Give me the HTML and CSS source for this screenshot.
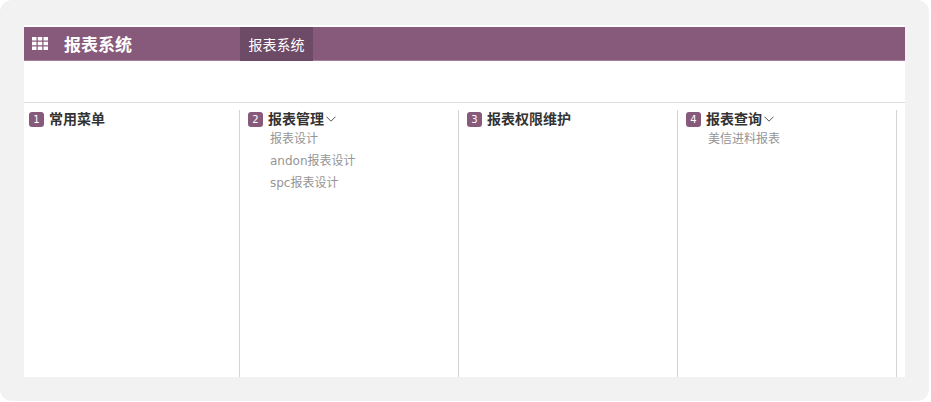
FILE: index.html
```html
<!DOCTYPE html>
<html lang="zh-CN">
<head>
<meta charset="utf-8">
<title>报表系统</title>
<link rel="stylesheet" href="styles.css">
</head>
<body>
<div class="frame">
  <div class="window">
    <header class="navbar">
      <svg class="apps" viewBox="0 0 16 13" width="16" height="13"><path d="M0 0h4.500v3.500H0zM5.750 0h4.500v3.500h-4.500zM11.500 0H16v3.500h-4.500zM0 4.750h4.500v3.500H0zM5.750 4.750h4.500v3.500h-4.500zM11.500 4.750H16v3.500h-4.500zM0 9.500h4.500V13H0zM5.750 9.500h4.500V13h-4.500zM11.500 9.500H16V13h-4.500z" fill="#fff"/></svg>
      <span class="brand">报表系统</span>
      <span class="nav-item">报表系统</span>
    </header>
    <div class="toolbar"></div>
    <main class="columns">
      <section class="col">
        <h2 class="head"><span class="badge">1</span>常用菜单</h2>
      </section>
      <section class="col">
        <h2 class="head"><span class="badge">2</span>报表管理<svg class="chev" viewBox="0 0 10 6" width="10" height="6"><path d="M.5.700 5 5.200 9.500.700" fill="none" stroke="#555" stroke-width="1"/></svg></h2>
        <ul class="links">
          <li>报表设计</li>
          <li>andon报表设计</li>
          <li>spc报表设计</li>
        </ul>
      </section>
      <section class="col">
        <h2 class="head"><span class="badge">3</span>报表权限维护</h2>
      </section>
      <section class="col">
        <h2 class="head"><span class="badge">4</span>报表查询<svg class="chev" viewBox="0 0 10 6" width="10" height="6"><path d="M.5.700 5 5.200 9.500.700" fill="none" stroke="#555" stroke-width="1"/></svg></h2>
        <ul class="links">
          <li>美信进料报表</li>
        </ul>
      </section>
    </main>
  </div>
</div>
</body>
</html>
```
FILE: styles.css
```css
* { box-sizing: border-box; }
html, body { margin: 0; padding: 0; background: #fff; }
body {
  width: 931px;
  height: 402px;
  overflow: hidden;
  font-family: "Noto Sans CJK SC", "Liberation Sans", sans-serif;
}
.frame {
  width: 929px;
  height: 401px;
  background: #f2f2f2;
  border-radius: 12px;
  padding: 25px 24px 24px;
}
.window {
  width: 881px;
  height: 352px;
  background: #fff;
  padding-top: 2px;
  display: flex;
  flex-direction: column;
}
.navbar {
  height: 34px;
  flex: none;
  background: #875a7b;
  border-bottom: 1px solid #a57f9a;
  display: flex;
  align-items: center;
  padding-left: 8px;
}
.apps { flex: none; }
.brand {
  margin-left: 16px;
  font-size: 17px;
  line-height: 20px;
  font-weight: 700;
  color: #fff;
  width: 176px;
}
.nav-item {
  align-self: stretch;
  margin-bottom: -1px;
  width: 73px;
  background: #6d4a65;
  color: #fff;
  font-size: 14px;
  display: flex;
  align-items: center;
  justify-content: center;
}
.toolbar {
  height: 42px;
  flex: none;
  border-bottom: 1px solid #dcdcdc;
}
.columns {
  flex: 1;
  display: grid;
  grid-template-columns: 216px 219px 219px 219px;
  padding-top: 7px;
}
.col {
  border-right: 1px solid #d4d4d4;
  padding: 0 0 0 8px;
}
.col:first-child { padding-left: 5px; }
.head {
  margin: 0;
  height: 16px;
  display: flex;
  align-items: flex-start;
  font-size: 14px;
  font-weight: 700;
  color: #333;
  line-height: 16px;
}
.badge {
  width: 15px;
  height: 15px;
  margin-top: 2px;
  border-radius: 3px;
  background: #875a7b;
  color: #fff;
  font-family: "DejaVu Sans", sans-serif;
  font-size: 10px;
  font-weight: 400;
  display: flex;
  align-items: center;
  justify-content: center;
  margin-right: 5px;
  flex: none;
}
.chev { margin: 6px 0 0 2px; }
.links {
  list-style: none;
  margin: 1.600px 0 0;
  padding: 0 0 0 22px;
  font-family: "DejaVu Sans", "Noto Sans CJK SC", sans-serif;
  font-size: 12px;
  color: #959595;
}
.links li {
  height: 22.400px;
  line-height: 22.400px;
}
```
